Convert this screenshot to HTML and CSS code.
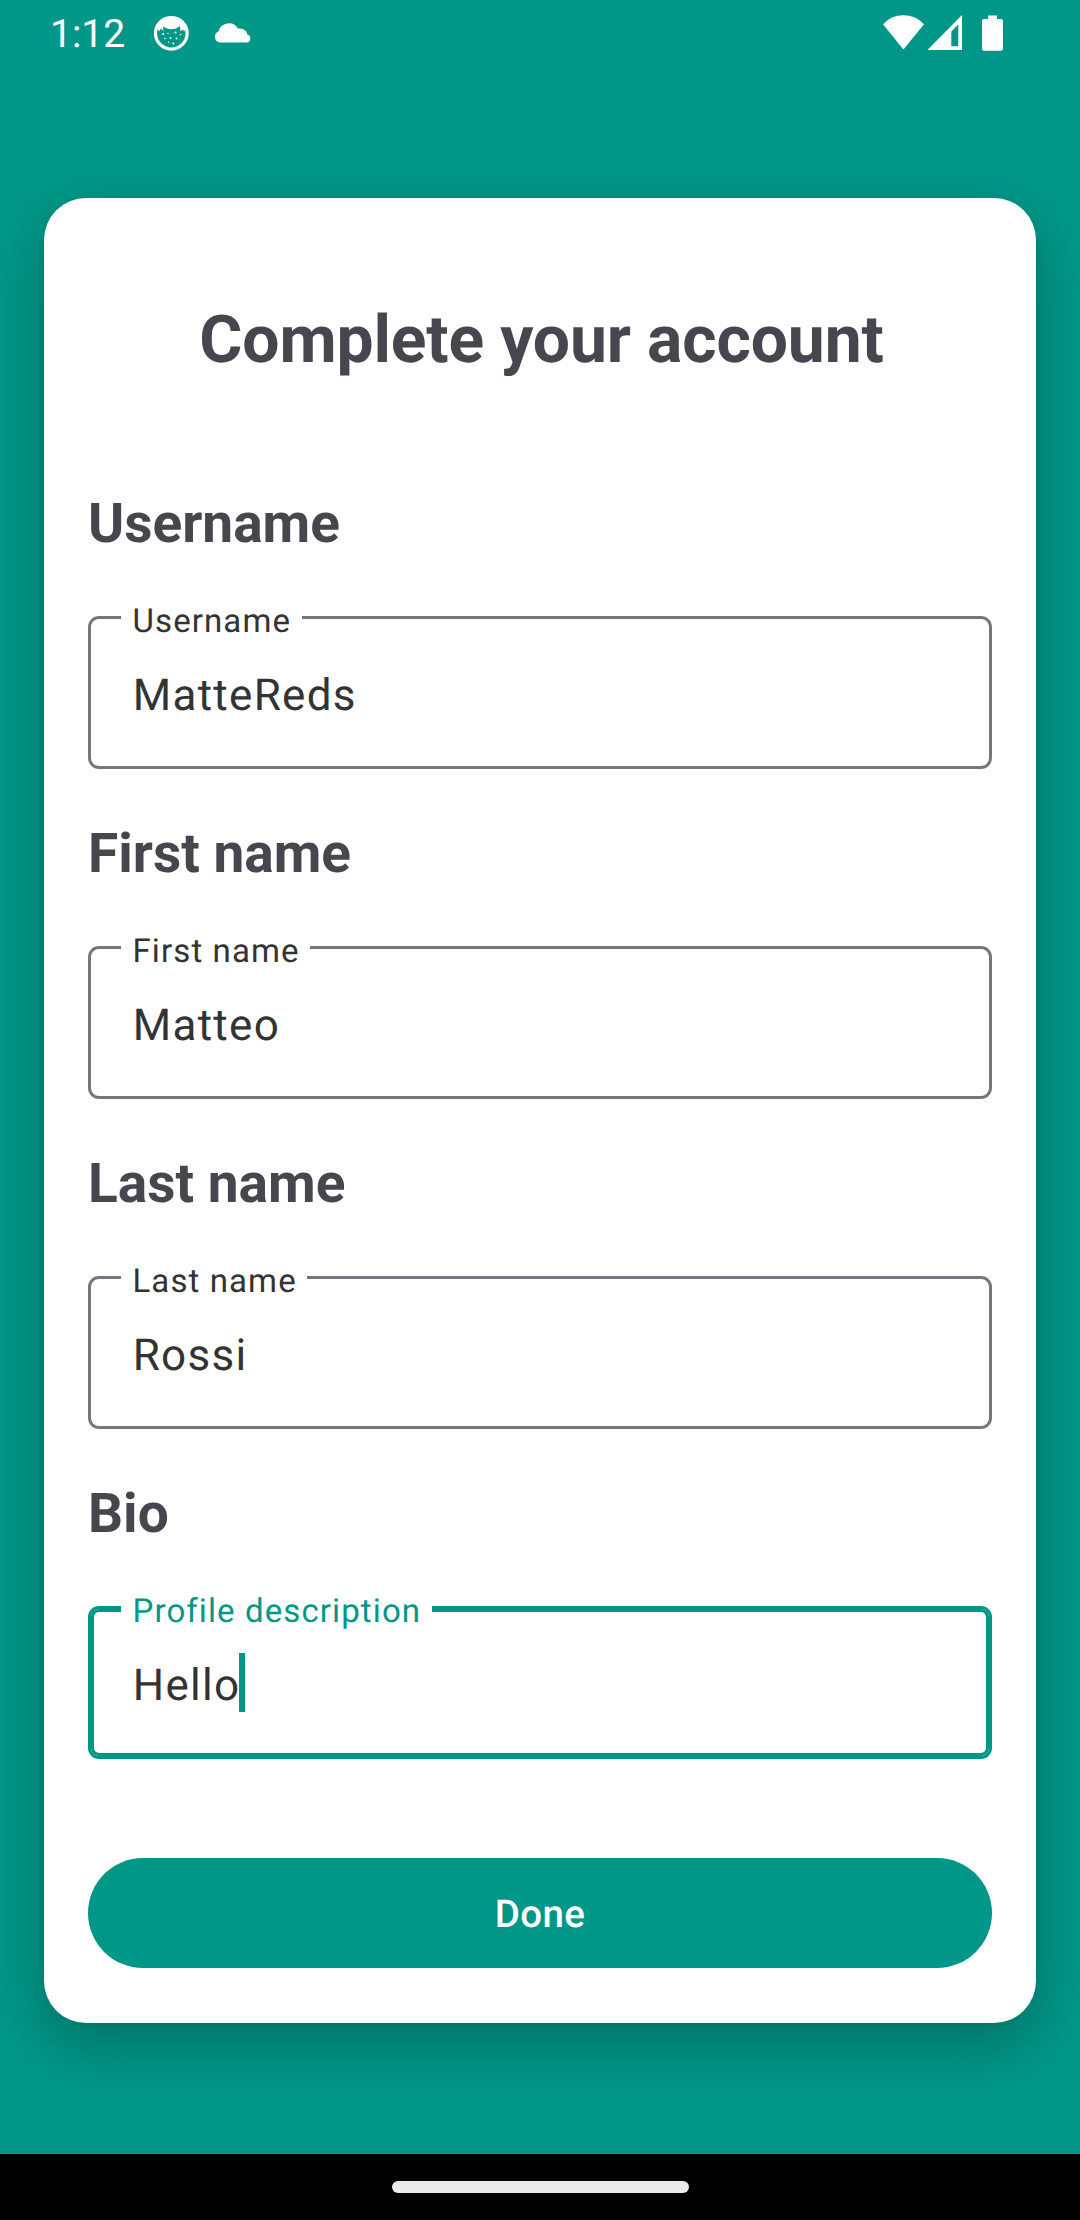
FILE: index.html
```html
<!DOCTYPE html>
<html lang="en">
<head>
<meta charset="utf-8">
<title>Complete your account</title>
<link rel="stylesheet" href="styles.css">
</head>
<body>
<header class="status">
  <span class="clock">1:12</span>
  <svg class="status-left" width="110" height="70" viewBox="148 0 110 70" fill="#fff">
    <circle cx="171.3" cy="33.3" r="15.8" fill="none" stroke="#fff" stroke-width="3.2"/>
    <path d="M157 27Q161 17.500 171.300 17.500T186 27L184.300 31.500L182.800 29.500L180.500 31.500L180 26L176 28.500Q171 30 167 28.500L163 26.500L163.500 31L161 28.500L159 31.500Z"/>
    <g>
      <circle cx="163.300" cy="34" r="1"/><circle cx="168" cy="33.500" r=".7"/><circle cx="175.500" cy="32.500" r="1.100"/>
      <circle cx="180.500" cy="34.500" r=".8"/><circle cx="165" cy="38.500" r=".8"/><circle cx="170.500" cy="38" r=".9"/>
      <circle cx="176.500" cy="38.500" r=".9"/><circle cx="173.300" cy="43.500" r="1"/><circle cx="168.500" cy="42.300" r=".7"/>
    </g>
    <path d="M219.500 42.500A5.900 5.900 0 0 1 218.400 31.400A10.700 10.700 0 0 1 238 28.600A7.800 7.800 0 0 1 247.300 34.400A4.200 4.200 0 0 1 247.300 42.500Z"/>
  </svg>
  <svg class="status-right" width="130" height="70" viewBox="880 0 130 70" fill="#fff">
    <path d="M883 24.300Q891 15.300 903.400 15.300T924 24.300L903.400 49.600Z"/>
    <path fill-rule="evenodd" d="M927.500 50L962 15V50ZM951.300 31.500V46.300H958.300V24.500Z"/>
    <path d="M984 19H988V15.500H997V19H1001Q1003 19 1003 21V48.800Q1003 50.800 1001 50.800H984Q982 50.800 982 48.800V21Q982 19 984 19Z"/>
  </svg>
</header>
<main class="card">
  <h1 class="title">Complete your account</h1>
  <section class="group">
    <h2 class="heading">Username</h2>
    <div class="field"><span class="label">Username</span><div class="value">MatteReds</div></div>
  </section>
  <section class="group">
    <h2 class="heading">First name</h2>
    <div class="field"><span class="label">First name</span><div class="value">Matteo</div></div>
  </section>
  <section class="group">
    <h2 class="heading">Last name</h2>
    <div class="field"><span class="label">Last name</span><div class="value">Rossi</div></div>
  </section>
  <section class="group">
    <h2 class="heading">Bio</h2>
    <div class="field focused"><span class="label">Profile description</span><div class="value">Hello<i class="caret"></i></div></div>
  </section>
  <button class="done">Done</button>
</main>
<footer class="nav"><div class="handle"></div></footer>
</body>
</html>
```
FILE: styles.css
```css
* { box-sizing: border-box; }

body {
  margin: 0;
  width: 1080px;
  height: 2220px;
  display: flex;
  flex-direction: column;
  background: #009788;
  font-family: Roboto, sans-serif;
  text-rendering: geometricPrecision;
  overflow: hidden;
}

.status {
  display: flex;
  height: 70px;
  padding: 0 70px 0 50px;
}

.clock {
  width: 98px;
  color: #fff;
  font-size: 39px;
  line-height: 69px;
}

.status-left, .status-right { flex: none; }
.status-right { margin-left: auto; }

.card {
  display: flex;
  flex-direction: column;
  margin: 128px 44px 0;
  padding: 99px 44px 55px;
  background: #fff;
  border-radius: 42px;
  box-shadow: 0 22px 60px rgba(0, 0, 0, .25), 0 0 10px rgba(0, 0, 0, .04);
}

.title, .heading { margin: 0; color: #49454f; font-weight: 700; }
.title {
  margin-bottom: 106px;
  padding-left: 3px;
  font-size: 66px;
  line-height: 88px;
  letter-spacing: -.14px;
  text-align: center;
}

.group { margin-bottom: 52px; }
.group:last-of-type { margin-bottom: 99px; }
.heading { margin-bottom: 59px; font-size: 55px; line-height: 66px; }

.field {
  display: flex;
  flex-direction: column;
  align-items: flex-start;
  height: 153px;
  border: 3px solid #79747e;
  border-radius: 11px;
  color: #333;
}

.label {
  margin: -16px 0 29px 30px;
  padding: 0 10.5px 0 11.5px;
  background: #fff;
  font-size: 33px;
  line-height: 37px;
  letter-spacing: 1.1px;
}

.value {
  display: flex;
  height: 52px;
  margin-left: 41.7px;
  font-size: 44px;
  line-height: 52px;
  letter-spacing: 1.3px;
}

.focused { border-color: #009788; box-shadow: inset 0 0 0 3px #009788; }
.focused .label { color: #009788; }

.caret { width: 6px; height: 59px; margin: -6px 0 0 -1.5px; background: #009788; }

.done {
  height: 110px;
  padding: 3px 0 0;
  border: 0;
  border-radius: 55px;
  background: #009788;
  color: #fff;
  font: 500 38.500px/107px Roboto, sans-serif;
  letter-spacing: .35px;
  text-rendering: geometricPrecision;
}

.nav {
  display: flex;
  justify-content: center;
  height: 66px;
  margin-top: auto;
  padding-top: 27px;
  background: #000;
}

.handle { width: 297px; height: 12px; border-radius: 6px; background: #ebebeb; }
```
